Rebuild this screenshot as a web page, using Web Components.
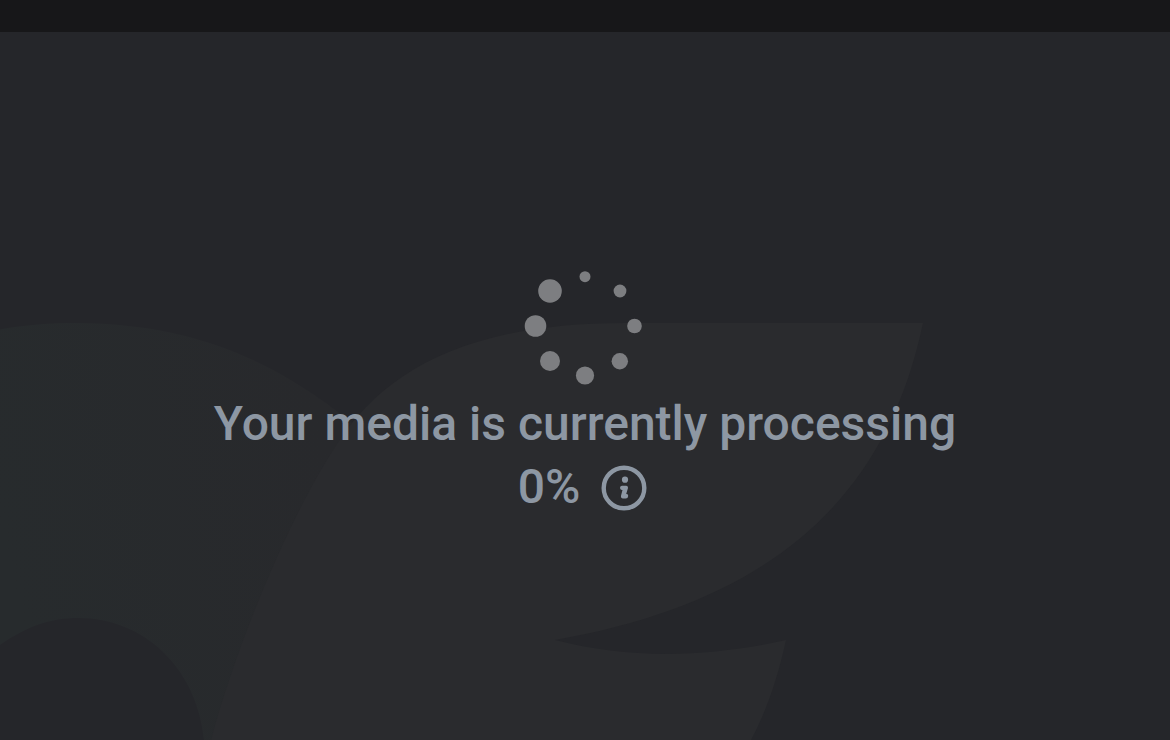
<!DOCTYPE html>
<html lang="en">
<head>
<meta charset="utf-8">
<meta name="viewport" content="width=device-width, initial-scale=1">
<title>Media processing</title>
<style>
  body { margin: 0; background: #25262a; font-family: Roboto, "Liberation Sans", sans-serif; color: #8d97a3; }
</style>
</head>
<body>
<media-player>
  <loading-dots slot="indicator"></loading-dots>
  <processing-status slot="status" progress="0">Your media is currently processing</processing-status>
</media-player>
<script>
class BrandWatermark extends HTMLElement {
  constructor() {
    super();
    this.attachShadow({ mode: "open" }).innerHTML = `
      <style>
        :host { display: block; }
        svg { display: block; width: 100%; height: 100%; }
      </style>
      <svg viewBox="0 0 1170 708" preserveAspectRatio="xMidYMid slice" aria-hidden="true">
        <defs>
          <linearGradient id="petal" gradientUnits="userSpaceOnUse" x1="0" y1="500" x2="330" y2="420">
            <stop offset="0" stop-color="#272b2d"/>
            <stop offset="1" stop-color="#28292c"/>
          </linearGradient>
        </defs>
        <path fill="url(#petal)" d="M-20 302C10 294 42 291 78 291C184 292 267 322 352 391L340 430L211 708L204 708C197 636 144 586 78 586C45 586 17 598 -20 628Z"/>
        <path fill="#2a2b2e" d="M211 708C236 613 290 483 337 412C383 341 464 291 625 291L923 291C885 472 765 571 555 608C632 628 710 625 786 608C778 645 767 678 751 708Z"/>
      </svg>`;
  }
}
customElements.define("brand-watermark", BrandWatermark);

class LoadingDots extends HTMLElement {
  constructor() {
    super();
    this.attachShadow({ mode: "open" }).innerHTML = `
      <style>
        :host { display: block; color: #7d7e81; }
        svg { display: block; width: 120px; height: 120px; overflow: visible; }
      </style>
      <svg viewBox="0 0 120 120" fill="currentColor" role="img" aria-label="Loading">
        <circle cx="60" cy="10.7" r="5.5"/>
        <circle cx="95" cy="25" r="6.4"/>
        <circle cx="109.5" cy="60" r="7.3"/>
        <circle cx="94.8" cy="95.2" r="8.2"/>
        <circle cx="60" cy="109.5" r="9.1"/>
        <circle cx="25" cy="95" r="10"/>
        <circle cx="10.5" cy="60" r="10.8"/>
        <circle cx="25" cy="25" r="11.8"/>
      </svg>`;
  }
}
customElements.define("loading-dots", LoadingDots);

class InfoButton extends HTMLElement {
  constructor() {
    super();
    this.attachShadow({ mode: "open" }).innerHTML = `
      <style>
        :host { display: block; }
        button { display: block; padding: 0; border: 0; background: none; color: inherit; cursor: pointer; }
        svg { display: block; width: 46px; height: 46px; overflow: visible; }
      </style>
      <button type="button" aria-label="More information">
        <svg viewBox="0 0 46 46" fill="currentColor" aria-hidden="true">
          <circle cx="23" cy="24" r="20.3" fill="none" stroke="currentColor" stroke-width="4.4"/>
          <circle cx="24" cy="15.7" r="3.1"/>
          <path d="M21 21.8H25.3Q27.4 22 27 24L25.2 30.1H25.6Q27.4 30.3 27.2 32Q26.9 34.5 24.8 34.5H22Q19.6 34.1 20 31.7L21.5 25.9H20.8Q19 25.7 19 23.8Q19.2 21.9 21 21.8Z"/>
        </svg>
      </button>`;
  }
}
customElements.define("info-button", InfoButton);

class ProcessingStatus extends HTMLElement {
  constructor() {
    super();
    this.attachShadow({ mode: "open" }).innerHTML = `
      <style>
        :host { display: block; font-size: 48px; font-weight: 500; line-height: 63px; text-align: center; }
        .row { display: flex; justify-content: center; align-items: center; gap: 21px; padding-right: 5px; }
      </style>
      <div><slot></slot></div>
      <div class="row"><span>${Number(this.getAttribute("progress"))}%</span><info-button></info-button></div>`;
  }
}
customElements.define("processing-status", ProcessingStatus);

class MediaPlayer extends HTMLElement {
  constructor() {
    super();
    this.attachShadow({ mode: "open" }).innerHTML = `
      <style>
        :host { display: flex; flex-direction: column; min-height: 100vh; }
        header { height: 32px; background: #171719; }
        main { position: relative; flex: 1; display: flex; flex-direction: column; align-items: center;
               justify-content: center; gap: 6px; padding-top: 12px; }
        brand-watermark { position: absolute; inset: 0; }
        slot { display: block; position: relative; }
      </style>
      <header></header>
      <main>
        <brand-watermark></brand-watermark>
        <slot name="indicator"></slot>
        <slot name="status"></slot>
      </main>`;
  }
}
customElements.define("media-player", MediaPlayer);
</script>
</body>
</html>
